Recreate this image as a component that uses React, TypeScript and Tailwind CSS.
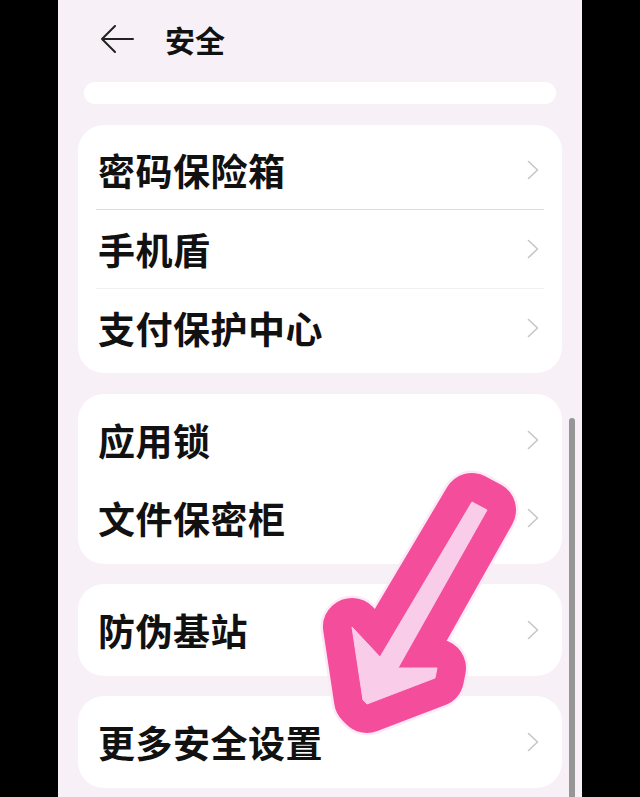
import React from "react";

type Row = { label: string; divider?: "strong" | "faint" | "none" };

const groups: Row[][] = [
  [
    { label: "密码保险箱", divider: "strong" },
    { label: "手机盾", divider: "faint" },
    { label: "支付保护中心" },
  ],
  [{ label: "应用锁" }, { label: "文件保密柜" }],
];

function Chevron() {
  return (
    <svg width="12" height="20" viewBox="0 0 12 20" fill="none">
      <polyline points="1.5,1.5 10.5,10 1.5,18.5" stroke="#c6c6c6" strokeWidth="1.6" strokeLinecap="round" strokeLinejoin="round" />
    </svg>
  );
}

function ItemRow({ label, tall }: { label: string; tall?: boolean }) {
  return (
    <div className={`flex items-center justify-between pl-[20px] pr-[23px] ${tall ? "h-[92px]" : "h-[78px]"}`}>
      <span className="text-[37px] font-bold leading-none tracking-[0.5px] text-[#111111]">{label}</span>
      <Chevron />
    </div>
  );
}

function Arrow() {
  const shape =
    "472,502 380,657 352,627 363,700 367,704 435,678 437,668 398,668 487,510";
  return (
    <svg className="pointer-events-none absolute left-0 top-0" width="640" height="797" viewBox="0 0 640 797">
      <polygon points={shape} fill="#fbe6f3" stroke="#fbe6f3" strokeWidth="63" strokeLinejoin="round" opacity="0.8" />
      <polygon points={shape} fill="#f44d9b" stroke="#f44d9b" strokeWidth="58" strokeLinejoin="round" />
      <polygon points={shape} fill="#f9cde9" stroke="#f9cde9" strokeWidth="1" strokeLinejoin="round" />
    </svg>
  );
}

export default function App() {
  return (
    <div
      className="relative flex h-[797px] w-[640px] overflow-hidden bg-black"
      style={{ fontFamily: '"Noto Sans CJK SC", "Noto Sans", sans-serif' }}
    >
      <div className="w-[58px] shrink-0 bg-black" />
      <div className="relative flex w-[524px] shrink-0 flex-col bg-[#f7f1f7]">
        <header className="flex h-[78px] shrink-0 items-center pl-[42px]">
          <svg width="34" height="28" viewBox="0 0 34 28" fill="none">
            <path d="M2 14H33M15 1L2 14L15 27" stroke="#222222" strokeWidth="2" strokeLinecap="round" strokeLinejoin="round" />
          </svg>
          <h1 className="ml-[31px] text-[30px] font-bold leading-none text-[#111111]">安全</h1>
        </header>

        <div className="mx-[26px] mt-[4px] h-[22px] shrink-0 rounded-[12px] bg-white" />

        <div className="mx-[20px] mt-[21px] shrink-0 rounded-[26px] bg-white py-[6px]">
          {groups[0].map((r) => (
            <div key={r.label}>
              <ItemRow label={r.label} />
              {r.divider === "strong" && <div className="mx-[18px] h-px bg-[#dddddd]" />}
              {r.divider === "faint" && <div className="mx-[18px] h-px bg-[#f1eff1]" />}
            </div>
          ))}
        </div>

        <div className="mx-[20px] mt-[21px] shrink-0 rounded-[26px] bg-white py-[7px]">
          {groups[1].map((r) => (
            <ItemRow key={r.label} label={r.label} />
          ))}
        </div>

        <div className="mx-[20px] mt-[20px] shrink-0 rounded-[26px] bg-white">
          <ItemRow label="防伪基站" tall />
        </div>

        <div className="mx-[20px] mt-[20px] shrink-0 rounded-[26px] bg-white">
          <ItemRow label="更多安全设置" tall />
        </div>

        <div className="absolute left-[511px] top-[418px] h-[400px] w-[6px] rounded-full bg-[#969696]" />
      </div>
      <div className="flex-1 bg-black" />
      <Arrow />
    </div>
  );
}
